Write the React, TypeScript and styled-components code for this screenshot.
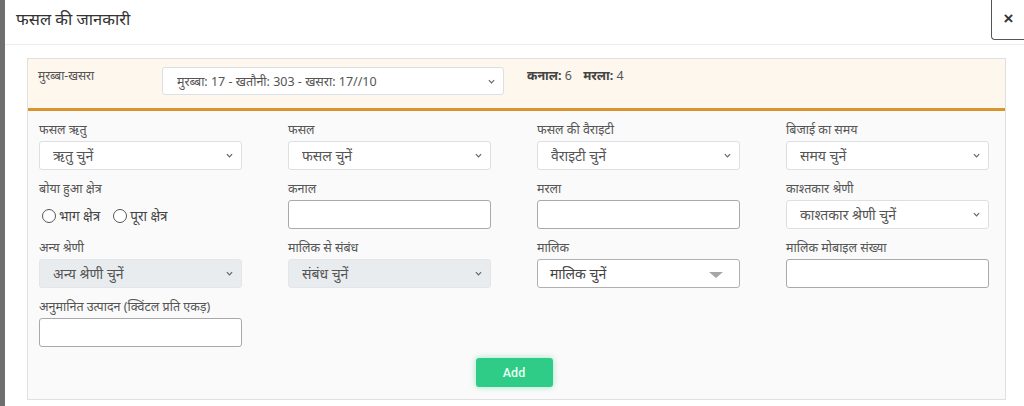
import React, { FC } from 'react'
import styled, { createGlobalStyle } from 'styled-components'

const GlobalStyle = createGlobalStyle`
  html, body {
    margin: 0;
    padding: 0;
    background: #ffffff;
    overflow: hidden;
  }
  body {
    font-family: "Noto Sans", "Noto Sans Devanagari", sans-serif;
    color: #333;
  }
  * { box-sizing: border-box; }
`

const Page = styled.div`
  display: flex;
  width: 1024px;
  height: 406px;
  border-left: 5px solid #6f6f6f;
`

const Modal = styled.div`
  flex: 1;
  display: flex;
  flex-direction: column;
`

const ModalHeader = styled.header`
  flex-shrink: 0;
  display: flex;
  justify-content: space-between;
  align-items: flex-start;
  height: 45px;
  border-bottom: 1px solid #ececec;
`

const Title = styled.h4`
  margin: 0;
  padding: 7px 0 0 11px;
  font-size: 16.5px;
  font-weight: 400;
  color: #333;
`

const CloseButton = styled.button`
  width: 34px;
  height: 40px;
  border: 1px solid #555;
  border-top: none;
  border-right: none;
  border-radius: 0 0 0 4px;
  background: #fff;
  font-family: "Liberation Sans", sans-serif;
  font-size: 17px;
  font-weight: 700;
  color: #333;
  padding: 0 0 2px 0;
  text-align: center;
  cursor: pointer;
`

const Card = styled.section`
  flex-shrink: 0;
  margin: 13px 19px 0 22px;
  border: 1px solid #e0e0e0;
  background: #fafafa;
  display: flex;
  flex-direction: column;
`

const CardHeader = styled.div`
  flex-shrink: 0;
  display: flex;
  align-items: flex-start;
  height: 52px;
  padding: 8px 10px 0 10px;
  background: #fdf7ed;
  border-bottom: 3px solid #d7952c;
`

const HeadLabel = styled.span`
  width: 124px;
  padding-top: 0;
  font-size: 12px;
  color: #555;
`

const Area = styled.div`
  margin-left: 23px;
  font-size: 12.5px;
  color: #555;
  b {
    font-weight: 700;
    color: #444;
  }
  b + span { margin-right: 8px; }
`

const CardBody = styled.div`
  padding: 12px 16px 12px 11px;
  display: flex;
  flex-direction: column;
  align-items: center;
`

const Grid = styled.div`
  align-self: stretch;
  display: grid;
  grid-template-columns: repeat(4, 203px);
  column-gap: 46px;
  row-gap: 12px;
`

const Field = styled.div`
  display: flex;
  flex-direction: column;
`

const Label = styled.label`
  height: 14px;
  margin-bottom: 4px;
  font-size: 12.5px;
  line-height: 14px;
  color: #555;
  white-space: nowrap;
`

const SelectWrap = styled.div<{ $width?: number }>`
  position: relative;
  width: ${p => p.$width ?? 203}px;
`

const NativeSelect = styled.select<{ $disabled?: boolean; $small?: boolean }>`
  width: 100%;
  height: ${p => (p.$small ? 28 : 29)}px;
  appearance: none;
  -webkit-appearance: none;
  padding: 0 24px 0 ${p => (p.$small ? 14 : 13)}px;
  border: 1px solid ${p => (p.$disabled ? '#e3e5e8' : '#dcdfe3')};
  border-radius: 3px;
  background: ${p => (p.$disabled ? '#e9ecef' : '#ffffff')};
  font-family: inherit;
  font-size: ${p => (p.$small ? 12.5 : 14)}px;
  color: #555;
  outline: none;
  opacity: 1;
  &:disabled {
    color: #555;
    opacity: 1;
  }
`

const Chevron = styled.svg`
  position: absolute;
  right: 9px;
  top: 12px;
  width: 7px;
  height: 5px;
  pointer-events: none;
`

const Caret = styled.span`
  position: absolute;
  right: 16px;
  top: 12px;
  width: 0;
  height: 0;
  border-left: 7px solid transparent;
  border-right: 7px solid transparent;
  border-top: 6px solid #a6a6a6;
  pointer-events: none;
`

const CustomSelect = styled.div`
  position: relative;
  width: 203px;
  height: 29px;
  padding: 4px 12px;
  border: 1px solid #b0b0b0;
  border-radius: 3px;
  background: #fff;
  font-size: 14px;
  color: #444;
`

const TextInput = styled.input`
  width: 203px;
  height: 29px;
  border: 1px solid #a9a9a9;
  border-radius: 3px;
  background: #fff;
  outline: none;
`

const RadioRow = styled.div`
  display: flex;
  align-items: center;
  height: 29px;
  gap: 13px;
  padding: 2px 0 0 3px;
`

const RadioLabel = styled.label`
  display: flex;
  align-items: center;
  gap: 3px;
  font-size: 13.5px;
  color: #444;
`

const Radio = styled.span`
  width: 14px;
  height: 14px;
  border: 1px solid #555;
  border-radius: 50%;
  background: #fff;
`

const AddButton = styled.button`
  margin-top: 11px;
  width: 77px;
  height: 29px;
  border: none;
  border-radius: 3px;
  background: #2ecc86;
  box-shadow: 0 0 6px rgba(46, 204, 134, 0.45);
  color: #eafff4;
  font-family: Roboto, "Noto Sans", sans-serif;
  font-size: 12.5px;
  font-weight: 500;
  cursor: pointer;
`

const ChevronIcon: FC = () => (
  <Chevron viewBox="0 0 8 5">
    <path d="M1 1l3 3 3-3" fill="none" stroke="#666" strokeWidth="1.4" />
  </Chevron>
)

const Select: FC<{ value: string; disabled?: boolean; width?: number; small?: boolean }> = ({
  value,
  disabled,
  width,
  small,
}) => (
  <SelectWrap $width={width}>
    <NativeSelect $disabled={disabled} $small={small} disabled={disabled} defaultValue={value}>
      <option value={value}>{value}</option>
    </NativeSelect>
    <ChevronIcon />
  </SelectWrap>
)

const selectFields = [
  { label: 'फसल ऋतु', value: 'ऋतु चुनें' },
  { label: 'फसल', value: 'फसल चुनें' },
  { label: 'फसल की वैराइटी', value: 'वैराइटी चुनें' },
  { label: 'बिजाई का समय', value: 'समय चुनें' },
]

const App: FC = () => {
  return (
    <Page>
      <GlobalStyle />
      <Modal>
        <ModalHeader>
          <Title>फसल की जानकारी</Title>
          <CloseButton type="button">×</CloseButton>
        </ModalHeader>
        <Card>
          <CardHeader>
            <HeadLabel>मुरब्बा-खसरा</HeadLabel>
            <Select value="मुरब्बा: 17 - खतौनी: 303 - खसरा: 17//10" width={342} small />
            <Area>
              <b>कनाल:</b> <span>6</span> <b>मरला:</b> <span>4</span>
            </Area>
          </CardHeader>
          <CardBody>
            <Grid>
              {selectFields.map(f => (
                <Field key={f.label}>
                  <Label>{f.label}</Label>
                  <Select value={f.value} />
                </Field>
              ))}

              <Field>
                <Label>बोया हुआ क्षेत्र</Label>
                <RadioRow>
                  <RadioLabel><Radio />भाग क्षेत्र</RadioLabel>
                  <RadioLabel><Radio />पूरा क्षेत्र</RadioLabel>
                </RadioRow>
              </Field>
              <Field>
                <Label>कनाल</Label>
                <TextInput type="text" />
              </Field>
              <Field>
                <Label>मरला</Label>
                <TextInput type="text" />
              </Field>
              <Field>
                <Label>काश्तकार श्रेणी</Label>
                <Select value="काश्तकार श्रेणी चुनें" />
              </Field>

              <Field>
                <Label>अन्य श्रेणी</Label>
                <Select value="अन्य श्रेणी चुनें" disabled />
              </Field>
              <Field>
                <Label>मालिक से संबंध</Label>
                <Select value="संबंध चुनें" disabled />
              </Field>
              <Field>
                <Label>मालिक</Label>
                <CustomSelect>
                  मालिक चुनें
                  <Caret />
                </CustomSelect>
              </Field>
              <Field>
                <Label>मालिक मोबाइल संख्या</Label>
                <TextInput type="text" />
              </Field>

              <Field>
                <Label>अनुमानित उत्पादन (क्विंटल प्रति एकड़)</Label>
                <TextInput type="text" />
              </Field>
            </Grid>
            <AddButton type="button">Add</AddButton>
          </CardBody>
        </Card>
      </Modal>
    </Page>
  )
}

export default App
